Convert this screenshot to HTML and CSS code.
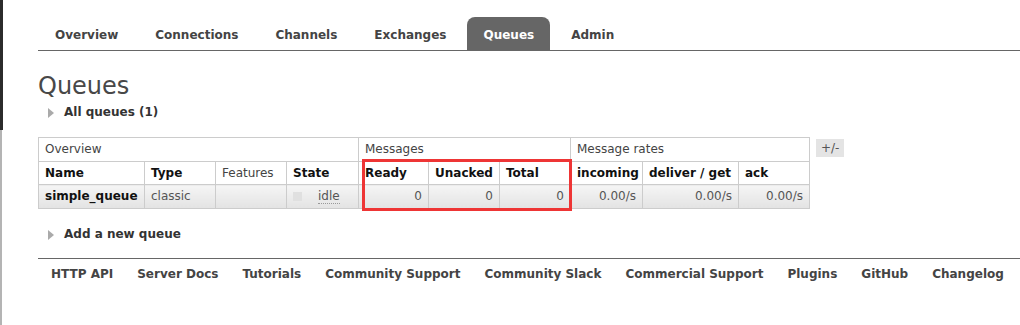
FILE: index.html
```html
<!DOCTYPE html>
<html lang="en">

<head>
  <meta charset="UTF-8" />
  <meta name="viewport" content="width=device-width, initial-scale=1.0" />
  <title>RabbitMQ Management: Queues</title>
  <link rel="stylesheet" href="styles.css">
</head>

<body>
  <div class="main">
    <ul class="tabs">
      <li><a href="#">Overview</a></li>
      <li><a href="#">Connections</a></li>
      <li><a href="#">Channels</a></li>
      <li><a href="#">Exchanges</a></li>
      <li class="active"><a href="#">Queues</a></li>
      <li><a href="#">Admin</a></li>
    </ul>

    <h1>Queues</h1>
    <h2 class="toggle">All queues (1)</h2>

    <div class="list-wrap">
      <div class="table-box">
        <table class="list">
          <colgroup>
            <col class="c-name">
            <col class="c-type">
            <col class="c-feat">
            <col class="c-state">
            <col class="c-ready">
            <col class="c-unacked">
            <col class="c-total">
            <col class="c-in">
            <col class="c-deliver">
            <col class="c-ack">
          </colgroup>
          <thead>
            <tr class="group">
              <th colspan="4">Overview</th>
              <th colspan="3">Messages</th>
              <th colspan="3">Message rates</th>
            </tr>
            <tr class="heads">
              <th>Name</th>
              <th>Type</th>
              <th class="plain">Features</th>
              <th>State</th>
              <th>Ready</th>
              <th>Unacked</th>
              <th>Total</th>
              <th>incoming</th>
              <th>deliver / get</th>
              <th>ack</th>
            </tr>
          </thead>
          <tbody>
            <tr>
              <td class="name">simple_queue</td>
              <td>classic</td>
              <td></td>
              <td><span class="dot"></span><span class="idle">idle</span></td>
              <td class="num">0</td>
              <td class="num">0</td>
              <td class="num">0</td>
              <td class="num">0.00/s</td>
              <td class="num">0.00/s</td>
              <td class="num">0.00/s</td>
            </tr>
          </tbody>
        </table>
        <!-- red highlight drawn over the message counts -->
        <div class="mark"></div>
      </div>
      <span class="columns-btn">+/-</span>
    </div>

    <h2 class="toggle add">Add a new queue</h2>

    <ul class="footer">
      <li><a href="#">HTTP API</a></li>
      <li><a href="#">Server Docs</a></li>
      <li><a href="#">Tutorials</a></li>
      <li><a href="#">Community Support</a></li>
      <li><a href="#">Community Slack</a></li>
      <li><a href="#">Commercial Support</a></li>
      <li><a href="#">Plugins</a></li>
      <li><a href="#">GitHub</a></li>
      <li><a href="#">Changelog</a></li>
    </ul>
  </div>
</body>

</html>
```

FILE: styles.css
```css
html {
  background:
    linear-gradient(#2b2b2b, #2b2b2b) 0 0 / 3px 130px no-repeat,
    linear-gradient(#b4b4b4, #b4b4b4) 0 130px / 2px 100% no-repeat,
    #fff;
}

body {
  margin: 0;
  font-family: "DejaVu Sans", Verdana, sans-serif;
  font-size: 12px;
  color: #484848;
}

.main {
  margin-left: 38px;
  padding-top: 17px;
}

/* top navigation */
.tabs {
  list-style: none;
  margin: 0;
  padding: 0;
  display: flex;
  gap: 5px;
  border-bottom: 1px solid #666;
}

.tabs li:first-child {
  margin-left: 1px;
}

.tabs a {
  display: block;
  padding: 3px 16px 0;
  line-height: 30px;
  font-weight: bold;
  color: #444;
  text-decoration: none;
  border-radius: 8px 8px 0 0;
}

.tabs .active a {
  background: #666;
  color: #fff;
}

h1 {
  font-size: 24px;
  font-weight: normal;
  line-height: 28px;
  margin: 21px 0 0;
  color: #484848;
}

.toggle {
  display: flex;
  align-items: center;
  margin: 5px 0 0;
  padding-left: 10px;
  font-size: 12px;
  font-weight: bold;
  line-height: 15px;
  color: #333;
}

.toggle::before {
  content: "";
  border-left: 6px solid #aaa;
  border-top: 5px solid transparent;
  border-bottom: 5px solid transparent;
  margin-right: 10px;
}

.toggle.add {
  margin-top: 18px;
}

/* queue list */
.list-wrap {
  display: flex;
  align-items: flex-start;
  gap: 6px;
  margin-top: 17px;
}

.table-box {
  position: relative;
}

.list {
  border-collapse: collapse;
  table-layout: fixed;
  width: 772px;
}

.c-name { width: 106px; }
.c-type { width: 71px; }
.c-feat { width: 71px; }
.c-state { width: 72px; }
.c-ready { width: 70px; }
.c-unacked { width: 71px; }
.c-total { width: 71px; }
.c-in { width: 72px; }
.c-deliver { width: 96px; }
.c-ack { width: 71px; }

.list th,
.list td {
  border: 1px solid #ccc;
  padding: 4px 6px;
  line-height: 15px;
  text-align: left;
  white-space: nowrap;
  overflow: hidden;
}

.list th {
  font-weight: bold;
  color: #111;
}

.list .group th {
  font-weight: normal;
  color: #444;
}

.list .heads th {
  padding-bottom: 3px;
}

.list th.plain {
  font-weight: normal;
  color: #444;
}

.list td {
  background: linear-gradient(#f5f5f5, #e3e3e3);
  color: #555;
}

.list td.name {
  font-weight: bold;
  color: #111;
}

.list td.num {
  text-align: right;
}

.dot {
  display: inline-block;
  width: 9px;
  height: 9px;
  background: #e0e0e0;
  vertical-align: -1px;
}

.idle {
  margin-left: 16px;
  border-bottom: 1px dotted #999;
}

.mark {
  position: absolute;
  left: 324px;
  top: 22px;
  width: 210px;
  height: 52px;
  border: 3px solid #ee3535;
  box-sizing: border-box;
}

.columns-btn {
  margin-top: 2px;
  padding: 0 5px;
  line-height: 18px;
  background: #e4e4e4;
  color: #555;
}

/* footer links */
.footer {
  list-style: none;
  display: flex;
  margin: 16px 0 0;
  padding: 8px 0 0 1px;
  border-top: 1px solid #666;
}

.footer a {
  display: block;
  padding: 0 12px;
  line-height: 15px;
  font-weight: bold;
  color: #444;
  text-decoration: none;
}
```
